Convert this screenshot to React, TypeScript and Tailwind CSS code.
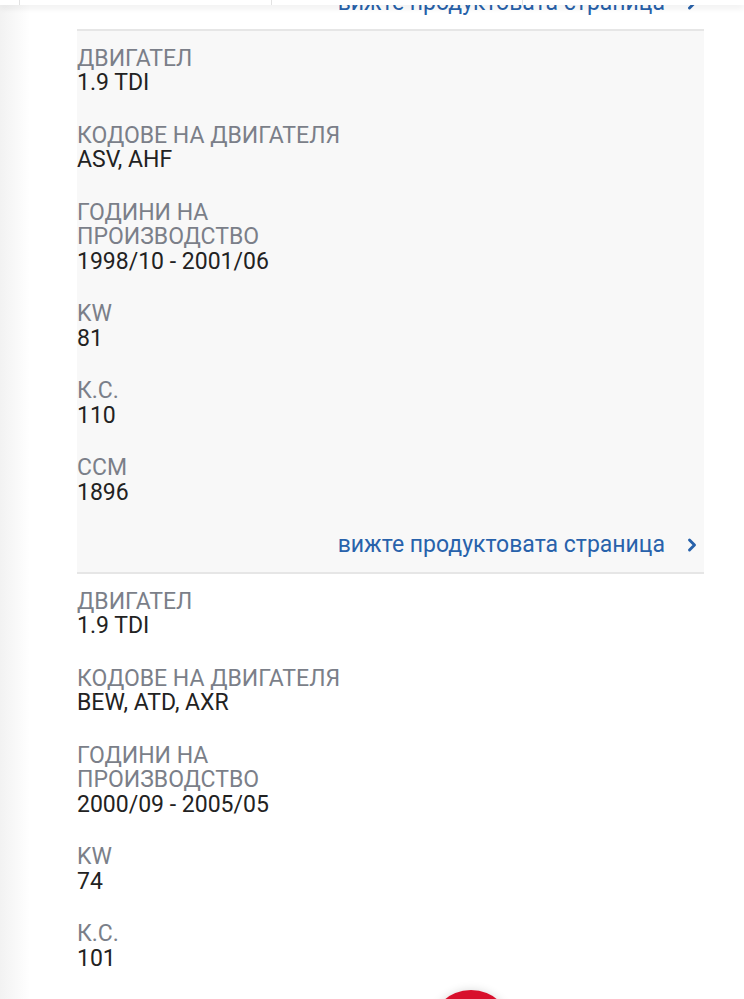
import { ChevronRight } from 'lucide-react'

type Spec = { label: string; value: string }

const engines: Spec[][] = [
	[
		{ label: 'ДВИГАТЕЛ', value: '1.9 TDI' },
		{ label: 'КОДОВЕ НА ДВИГАТЕЛЯ', value: 'ASV, AHF' },
		{ label: 'ГОДИНИ НА ПРОИЗВОДСТВО', value: '1998/10 - 2001/06' },
		{ label: 'KW', value: '81' },
		{ label: 'К.С.', value: '110' },
		{ label: 'CCM', value: '1896' }
	],
	[
		{ label: 'ДВИГАТЕЛ', value: '1.9 TDI' },
		{ label: 'КОДОВЕ НА ДВИГАТЕЛЯ', value: 'BEW, ATD, AXR' },
		{ label: 'ГОДИНИ НА ПРОИЗВОДСТВО', value: '2000/09 - 2005/05' },
		{ label: 'KW', value: '74' },
		{ label: 'К.С.', value: '101' },
		{ label: 'CCM', value: '1896' }
	]
]

const ProductLink = () => (
	<div className="flex justify-end items-center pr-[2px] leading-[24.5px] text-[23px] text-[#2862ab]">
		<span>вижте продуктовата страница</span>
		<ChevronRight size={20} strokeWidth={3.5} className="ml-[17px]" />
	</div>
)

const EngineCard = ({ specs, gray }: { specs: Spec[]; gray: boolean }) => (
	<div className={`border-b-2 border-[#e6e6e6] pt-[16px] pb-[14px] ${gray ? 'bg-[#f8f8f8]' : 'bg-white'}`}>
		<div className="flex flex-col gap-[28px]">
			{specs.map(s => (
				<div key={s.label} className="flex flex-col leading-[24.5px] text-[23px]">
					<span className="text-[#7b7f89] max-w-[290px]">{s.label}</span>
					<span className="text-[#222]">{s.value}</span>
				</div>
			))}
		</div>
		<div className="mt-[28px]">
			<ProductLink />
		</div>
	</div>
)

const App = () => {
	return (
		<div className="relative h-[999px] overflow-hidden bg-white" style={{ fontFamily: 'Roboto, "Noto Sans", sans-serif' }}>
			<div className="absolute left-0 top-0 h-full w-[30px] bg-gradient-to-r from-[#f2f2f2] to-white"></div>
			<div className="relative ml-[77px] mr-[40px] -mt-[9px]">
				<div className="border-b-2 border-[#e6e6e6] pb-[13px] bg-white">
					<ProductLink />
				</div>
				{engines.map((specs, i) => (
					<EngineCard key={i} specs={specs} gray={i % 2 === 0} />
				))}
			</div>
			<div className="absolute top-0 left-0 right-0 h-[5px] bg-white shadow-[0_3px_6px_rgba(0,0,0,0.08)] flex">
				<div className="w-[20px] border-r border-[#e2e2e2]"></div>
				<div className="w-[252px] border-r border-[#e2e2e2]"></div>
				<div className="w-[251px] border-r border-[#e2e2e2]"></div>
			</div>
			<div className="absolute left-[430px] top-[990px] w-[82px] h-[82px] rounded-full bg-[#d8102c] shadow-[0_0_10px_rgba(0,0,0,0.15)]"></div>
		</div>
	)
}

export default App
